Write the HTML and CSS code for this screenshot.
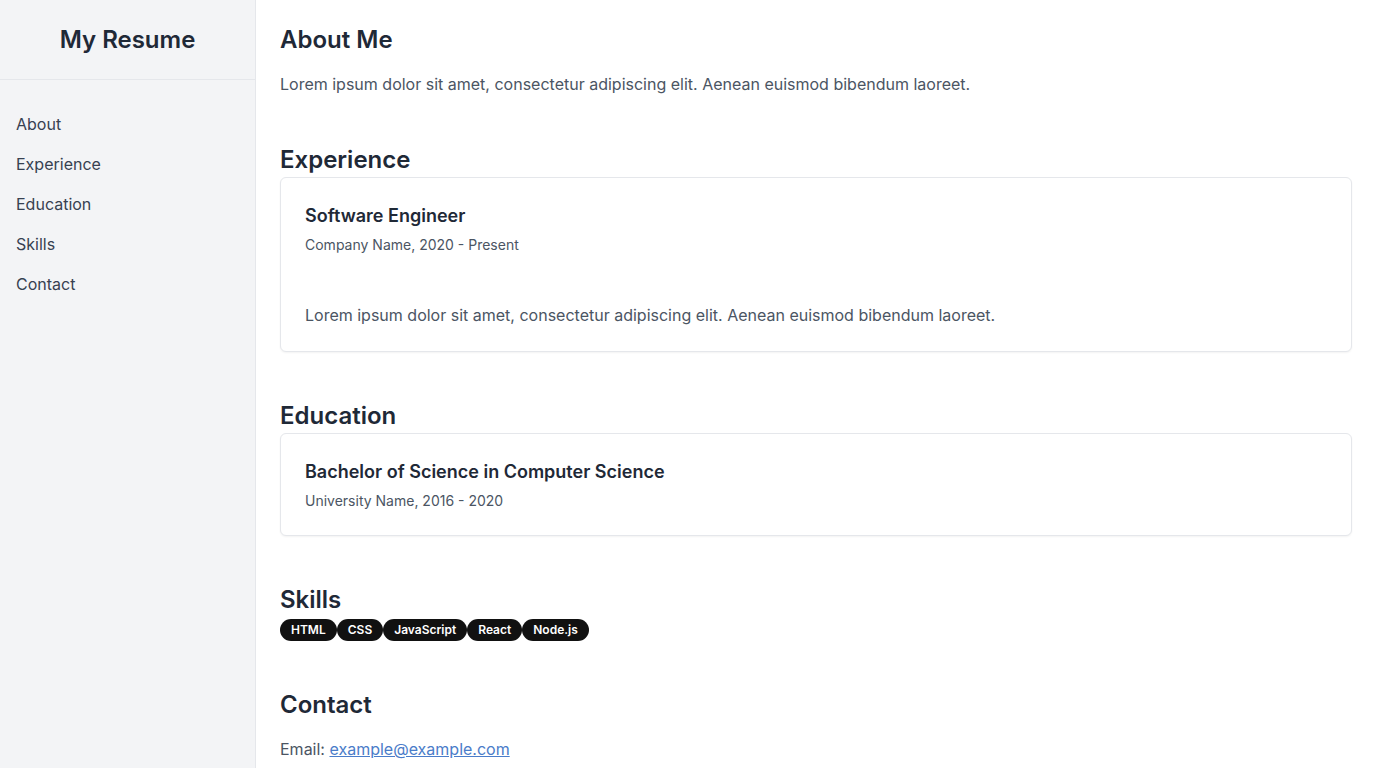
FILE: index.html
```html
<!DOCTYPE html>
<html lang="en">
<head>
<meta charset="utf-8">
<title>My Resume</title>
<link rel="stylesheet" href="styles.css">
</head>
<body>
<div class="layout">
  <aside class="sidebar">
    <div class="sidebar-header"><h1 class="brand">My Resume</h1></div>
    <nav class="nav">
      <a class="nav-link" href="#about">About</a>
      <a class="nav-link" href="#experience">Experience</a>
      <a class="nav-link" href="#education">Education</a>
      <a class="nav-link" href="#skills">Skills</a>
      <a class="nav-link" href="#contact">Contact</a>
    </nav>
  </aside>
  <main class="main">
    <section class="section" id="about">
      <h2 class="section-title spaced">About Me</h2>
      <p class="text">Lorem ipsum dolor sit amet, consectetur adipiscing elit. Aenean euismod bibendum laoreet.</p>
    </section>
    <section class="section" id="experience">
      <h2 class="section-title">Experience</h2>
      <div class="card">
        <h3 class="card-title">Software Engineer</h3>
        <p class="card-sub">Company Name, 2020 - Present</p>
        <p class="text card-body">Lorem ipsum dolor sit amet, consectetur adipiscing elit. Aenean euismod bibendum laoreet.</p>
      </div>
    </section>
    <section class="section" id="education">
      <h2 class="section-title">Education</h2>
      <div class="card">
        <h3 class="card-title">Bachelor of Science in Computer Science</h3>
        <p class="card-sub">University Name, 2016 - 2020</p>
      </div>
    </section>
    <section class="section" id="skills">
      <h2 class="section-title">Skills</h2>
      <div class="badges">
        <span class="badge">HTML</span>
        <span class="badge">CSS</span>
        <span class="badge">JavaScript</span>
        <span class="badge">React</span>
        <span class="badge">Node.js</span>
      </div>
    </section>
    <section class="section" id="contact">
      <h2 class="section-title spaced">Contact</h2>
      <p class="text">Email: <a class="link" href="mailto:example@example.com">example@example.com</a></p>
    </section>
  </main>
</div>
</body>
</html>
```

FILE: styles.css
```css
* { box-sizing: border-box; }
html, body { margin: 0; padding: 0; }
body {
  font-family: Inter, "Liberation Sans", sans-serif;
  background: #ffffff;
  color: #1f2937;
}
.layout {
  display: flex;
  min-height: 768px;
}
.sidebar {
  width: 256px;
  flex-shrink: 0;
  background: #f3f4f6;
  border-right: 1px solid #e5e7eb;
}
.sidebar-header {
  height: 80px;
  padding: 24px 16px 0;
  border-bottom: 1px solid #e5e7eb;
}
.brand {
  margin: 0;
  font-size: 24px;
  line-height: 32px;
  font-weight: 600;
  text-align: center;
  color: #1f2937;
}
.nav {
  display: flex;
  flex-direction: column;
  padding-top: 24px;
}
.nav-link {
  display: block;
  padding: 8px 16px;
  font-size: 16px;
  line-height: 24px;
  color: #374151;
  text-decoration: none;
}
.main {
  flex: 1;
  padding: 24px;
  display: flex;
  flex-direction: column;
  gap: 48px;
}
.section { margin: 0; }
.section-title {
  margin: 0;
  font-size: 24px;
  line-height: 32px;
  font-weight: 600;
  color: #1f2937;
}
.section-title.spaced { margin-bottom: 16px; }
.text {
  margin: 0;
  font-size: 16px;
  line-height: 24px;
  color: #4b5563;
}
.card {
  margin-top: 1px;
  border: 1px solid #e5e7eb;
  border-radius: 6px;
  padding: 24px;
  background: #fff;
  box-shadow: 0 1px 2px rgba(0,0,0,0.05);
}
.card-title {
  margin: 0;
  font-size: 18px;
  line-height: 28px;
  font-weight: 600;
  color: #1f2937;
}
.card-sub {
  margin: 5px 0 0;
  font-size: 14px;
  line-height: 20px;
  color: #4b5563;
}
.card-body { margin-top: 48px; }
.badges {
  display: flex;
  flex-wrap: wrap;
  margin-top: 3px;
}
.badge {
  display: inline-block;
  background: #111111;
  color: #ffffff;
  font-size: 12px;
  line-height: 16px;
  font-weight: 600;
  padding: 3px 11px;
  border-radius: 9999px;
}
.link {
  color: #4a7cc9;
  text-decoration: underline;
}
```
